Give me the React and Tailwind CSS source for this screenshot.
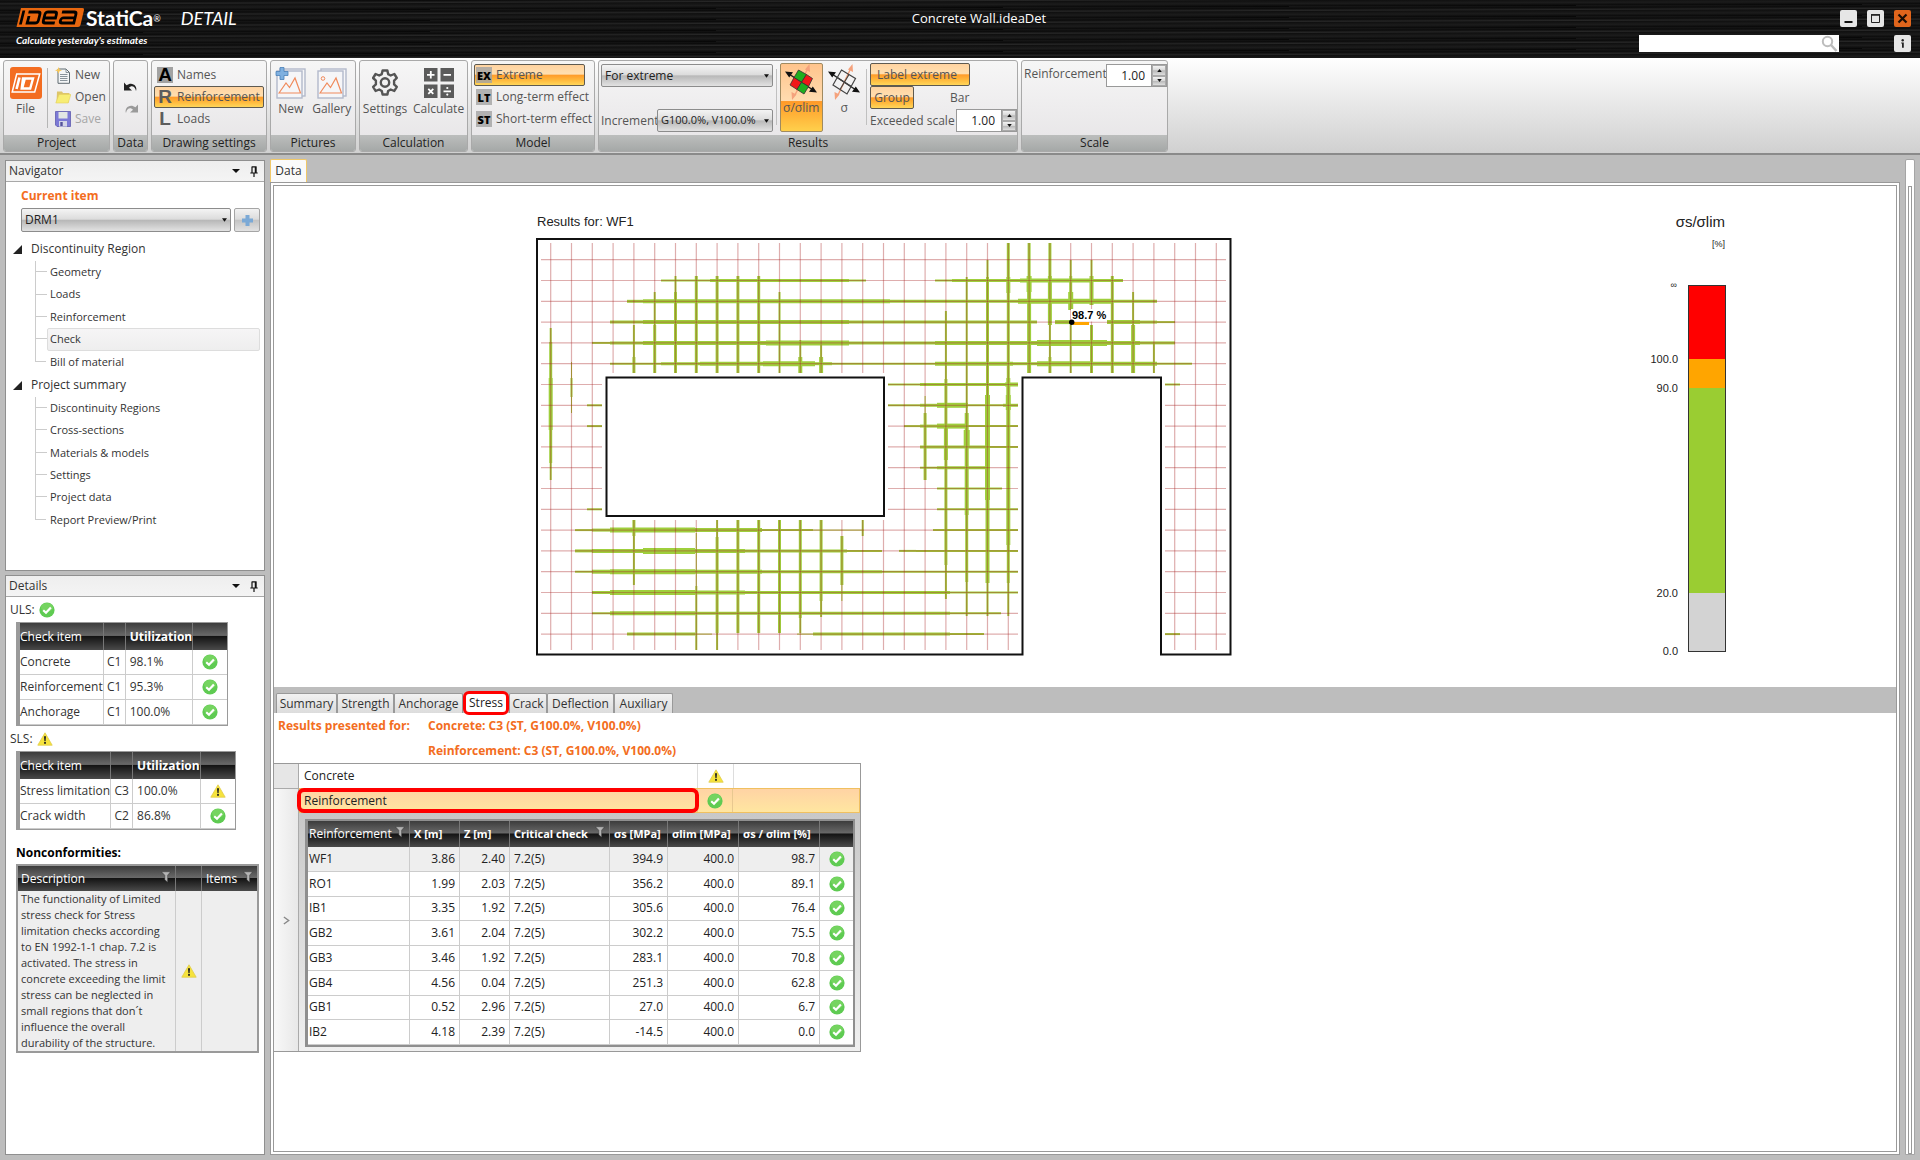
import React from "react";

const glossy = "border border-[#8c8c8c] bg-[linear-gradient(#f4f4f4_0%,#dcdcdc_46%,#b8b8b8_52%,#e2e2e2_100%)]";
const amber =
  "border border-[#5e5a50] bg-[linear-gradient(#ffd3a0_0%,#ffdfb0_45%,#ff9d2a_52%,#ffb83c_75%,#ffd65a_100%)]";
const darkHead =
  "bg-[linear-gradient(#3c3c3c_0%,#686868_46%,#141414_50%,#4a4a4a_100%)] text-white";

/* ---------- icons ---------- */

function Ok() {
  return (
    <svg viewBox="0 0 16 16" className="size-4 shrink-0" aria-label="ok">
      <circle cx="8" cy="8" r="7.6" fill="#5fcb52" />
      <ellipse cx="8" cy="5.4" rx="6" ry="4.4" fill="#86dc6c" opacity=".55" />
      <path d="M4.2 8.2 7 10.8 11.9 5.6" fill="none" stroke="#fff" strokeWidth="2.2" />
    </svg>
  );
}

function Warn() {
  return (
    <svg viewBox="0 0 16 16" className="size-4 shrink-0" aria-label="warning">
      <path d="M8 1.8 15.2 14.2H.8z" fill="#f6e33c" stroke="#e0cc4a" strokeWidth=".8" strokeLinejoin="round" />
      <path d="M7 5.2h2l-.4 5H7.4z" fill="#222" />
      <rect x="7.1" y="11" width="1.8" height="1.8" fill="#222" />
    </svg>
  );
}

function Funnel() {
  return (
    <svg viewBox="0 0 10 12" className="mb-1 h-3 w-[10px] shrink-0">
      <path d="M.5.8h9L6.600 4.200v7L3.800 8.800V4.200z" fill="#b4b4b4" stroke="#2a2a2a" strokeWidth=".4" />
    </svg>
  );
}

function Logo() {
  return (
    <svg viewBox="0 0 70 20" className="h-5 w-[70px] shrink-0" aria-label="IDEA">
      <path d="M5 0h61.500q2 0 1.500 2l-3.500 15q-.5 2-2.500 2H.5z" fill="#e8670f" />
      <g fill="none" stroke="#000" strokeWidth="2.800" transform="skewX(-14) translate(4 0)">
        <path d="M4.500 2.500v14" />
        <path d="M9.500 4h9.500q2.500 0 2.500 2.500v6q0 2.500-2.500 2.500H9.500M11 8v8" />
        <path d="M38.500 15H29q-2.500 0-2.500-2.500v-6Q26.500 4 29 4h6.500q2.500 0 2.500 2.500V10H27" />
        <path d="M43 4h12q2.500 0 2.500 2.500V15H46q-2.500 0-2.500-2.500T46 9.800h11" />
      </g>
    </svg>
  );
}

function FileIcon() {
  return (
    <svg viewBox="0 0 32 32" className="size-8">
      <rect width="32" height="32" rx="3" fill="#f36d21" />
      <g fill="none" stroke="#fff">
        <path d="M6 7h23l-5 18H1.500z" strokeWidth="1.500" transform="translate(.7 0)" />
        <path d="M9.500 10.500 6.500 22" strokeWidth="2.600" />
        <path d="M13 11.500h10l-2.800 10h-8.500zM15 11l-3 11" strokeWidth="2.400" />
      </g>
    </svg>
  );
}

function NewDoc() {
  return (
    <svg viewBox="0 0 16 17" className="h-[17px] w-4">
      <path d="M3 2h8l3.500 3.500V16.300H3z" fill="#f4f6f7" stroke="#5f6a70" />
      <path d="M11 2v3.500h3.500M5 7.500h7.500M5 9.500h7.500M5 11.500h7.500M5 13.500h7.500" fill="none" stroke="#7d888e" strokeWidth=".9" />
      <path d="M3.500 0l1 2.500L7 3.300 4.500 4.200l-1 2.600-1-2.600L0 3.300l2.500-.8z" fill="#f8c85a" />
    </svg>
  );
}

function OpenFolder() {
  return (
    <svg viewBox="0 0 16 14" className="h-[14px] w-4">
      <path d="M1.500 12.500 2 1.500h5l1 1.500h6.500l-.8 9.500z" fill="#ddc56a" />
      <path d="M4 4.500h11.800l-2.600 8.500H.8z" fill="#f7ed74" stroke="#e4d05a" strokeWidth=".6" />
    </svg>
  );
}

function SaveIcon() {
  return (
    <svg viewBox="0 0 16 16" className="size-4">
      <path d="M.5.5h15v15H2l-1.500-1.500z" fill="#7c79d6" stroke="#5f5cae" strokeWidth=".8" />
      <rect x="3.500" y="1" width="9" height="6.500" fill="#e2e6e4" />
      <rect x="4" y="10" width="8" height="5.600" fill="#d4d6e8" />
      <rect x="5.300" y="11" width="2.400" height="4" fill="#55529c" />
    </svg>
  );
}

function Arc({ flip, color }) {
  return (
    <svg viewBox="0 0 16 12" className={flip ? "h-3 w-4 -scale-x-100" : "h-3 w-4"}>
      <path d="M1 1.500v8h8L6 6.800C8 4 12.300 4.800 13 10c2-5-4-10-9.500-5.700z" fill={color} />
    </svg>
  );
}

function PictureIcon({ plus }) {
  return (
    <svg viewBox="0 0 32 34" className="h-[34px] w-8">
      <g fill="#f6f6f8" stroke="#b3b9cb" strokeWidth="1.400">
        <rect x="5" y="3" width="25" height="27" />
        <rect x="2" y="5" width="25" height="27" />
      </g>
      <path d="M4 27 11 17l3.500 4.500L20 12l5.500 15z" fill="none" stroke="#f08a5c" strokeWidth="1.200" />
      {plus ? (
        <path d="M5 1.500h4v4h4v4H9v4H5v-4H1v-4h4z" fill="#7fb0e0" stroke="#4a80b8" strokeWidth=".8" />
      ) : (
        <circle cx="7" cy="12.500" r="1.800" fill="none" stroke="#f08a5c" />
      )}
    </svg>
  );
}

function Gear() {
  return (
    <svg viewBox="0 0 28 28" className="size-7" fill="none" stroke="#555" strokeWidth="2.400" strokeLinejoin="round">
      <path d="M11.600 1.500h4.800l.7 3.600 2.600 1.400 3.600-1.500 2.500 4-2.700 2.600v3.800l2.700 2.500-2.500 4.100-3.600-1.500-2.600 1.500-.7 3.500h-4.800l-.8-3.500-2.600-1.500L4.600 22l-2.500-4.100 2.800-2.500v-3.800L2.100 9l2.500-4 3.600 1.500 2.600-1.400z" />
      <circle cx="14" cy="13.500" r="4.200" />
    </svg>
  );
}

function CalcIcon() {
  return (
    <svg viewBox="0 0 30 30" className="size-[30px]">
      <g fill="#5b5b5b">
        <rect width="13.500" height="13.500" />
        <rect x="16.500" width="13.500" height="13.500" />
        <rect y="16.500" width="13.500" height="13.500" />
        <rect x="16.500" y="16.500" width="13.500" height="13.500" />
      </g>
      <g stroke="#fff" strokeWidth="1.800" fill="none">
        <path d="M3 6.800h7.500M6.800 3v7.500M19.500 6.800H27M4.300 20.800l5 5M9.300 20.800l-5 5M19.500 23.300H27" />
      </g>
      <circle cx="23.300" cy="20" r="1.100" fill="#fff" />
      <circle cx="23.300" cy="26.600" r="1.100" fill="#fff" />
    </svg>
  );
}

function SigmaIcon({ filled }) {
  return (
    <svg viewBox="0 0 32 36" className="h-9 w-8">
      <g stroke="#f5a27c" strokeWidth="1.500" fill="#f5a27c">
        <path d="M22 6 10 31" />
        <path d="m24.500 0 .5 8-5-2.500zM7 36l-.5-8 5 2.500z" stroke="none" />
      </g>
      <path d="M4 10l24 16" stroke="#222" strokeWidth="1.500" />
      <path d="M0 7.500l8 .8-3.800 5.300zM32 28.500l-8-.8 3.800-5.300z" fill="#111" />
      {filled ? (
        <g stroke="#333" strokeWidth=".8">
          <path d="M13.500 6 21.500 10.500 16.500 18.300 9 13.500z" fill="#1fae1f" />
          <path d="M21.500 10.500 27.500 14.500 23.500 22.500 16.500 18.300z" fill="#f01818" />
          <path d="M9 13.500 16.500 18.300 12 25.500 5 21z" fill="#f01818" />
          <path d="M16.500 18.300 23.500 22.500 19 30 12 25.500z" fill="#1fae1f" />
        </g>
      ) : (
        <path d="M13.500 6 27.500 14.500 19 30 5 21zM21 10.500 12 25.500M9 13.500l14.500 9" fill="none" stroke="#444" strokeWidth="1.200" />
      )}
    </svg>
  );
}

/* ---------- ribbon ---------- */

function Group({ title, className, children }) {
  return (
    <section className={`flex h-[92px] flex-col overflow-hidden rounded-[3px] border border-[#a9a9a9] bg-linear-to-b from-[#f6f6f6] to-[#e6e4e6] ${className}`}>
      <div className="flex flex-1">{children}</div>
      <h2 className="h-4 bg-linear-to-b from-[#bcbebd] to-[#a5a8a7] text-center text-[12px] leading-4 text-[#222]">{title}</h2>
    </section>
  );
}

function BigButton({ icon, label }) {
  return (
    <button className="flex flex-col items-center">
      <span className="flex h-9 items-center">{icon}</span>
      <span className="leading-4">{label}</span>
    </button>
  );
}

function Row({ icon, label, className = "" }) {
  return (
    <button className={`flex h-[22px] items-center gap-1 rounded-[2px] ${className}`}>
      {icon}
      <span>{label}</span>
    </button>
  );
}

function Letter({ c, on }) {
  return (
    <span className={`flex h-4 w-4 shrink-0 items-center justify-center font-["Liberation_Sans"] text-[19px] leading-4 font-bold ${on ? "bg-[#a2a2a2] text-black" : "text-[#5c5c5c]"}`}>
      {c}
    </span>
  );
}

function Tag({ c }) {
  return (
    <span className="flex h-4 w-4 shrink-0 items-center justify-center bg-[#a2a2a2]/80 font-['Open_Sans'] text-[11px] leading-none font-extrabold text-black">{c}</span>
  );
}

function Drop({ value, label, className, text = "text-[12px]" }) {
  return (
    <span className={`relative flex ${className}`}>
      <select aria-label={label} className={`w-full appearance-none rounded-[2px] px-[3px] text-[#222] ${text} ${glossy}`}>
        <option>{value}</option>
      </select>
      <svg viewBox="0 0 6 4" className="pointer-events-none absolute top-1/2 right-1 h-1 w-[5px] -translate-y-1/2">
        <path d="M0 0h6L3 4z" fill="#111" />
      </svg>
    </span>
  );
}

function Spin({ label, id, className = "" }) {
  return (
    <span className={`flex h-[23px] w-[61px] border border-[#999] bg-white ${className}`}>
      <input id={id} aria-label={label} defaultValue="1.00" className="w-11 bg-white pr-[6px] text-right text-[12px] text-[#222]" />
      <span className="flex w-[15px] flex-col border-l border-[#999]">
        {["up", "down"].map((d) => (
          <button key={d} aria-label={d} className="flex flex-1 items-center justify-center border border-[#aaa] bg-[linear-gradient(#f2f2f2_0%,#d8d8d8_46%,#b8b8b8_52%,#dedede_100%)]">
            <svg viewBox="0 0 6 4" className="h-[3px] w-[5px]">
              <path d={d === "up" ? "M0 4h6L3 0z" : "M0 0h6L3 4z"} fill="#111" />
            </svg>
          </button>
        ))}
      </span>
    </span>
  );
}

function Ribbon() {
  return (
    <div className="flex h-[97px] items-start gap-[3px] border-b-2 border-[#8a8a8a] bg-linear-to-b from-white to-[#d0d0d0] pt-[2px] pl-[3px] text-[12px] text-[#555]">
      <Group title="Project" className="w-[107px]">
        <div className="flex w-[43px] justify-center pt-1">
          <BigButton icon={<FileIcon />} label="File" />
        </div>
        <div className="my-[7px] w-px bg-[#b5b5b5]" />
        <div className="flex flex-col pt-[3px] pl-[7px]">
          <Row icon={<NewDoc />} label="New" />
          <Row icon={<OpenFolder />} label="Open" />
          <Row icon={<SaveIcon />} label="Save" className="text-[#a6a6a6]" />
        </div>
      </Group>
      <Group title="Data" className="w-[35px]">
        <div className="flex flex-1 flex-col items-center gap-[10px] pt-5">
          <button aria-label="Undo"><Arc color="#222" /></button>
          <button aria-label="Redo"><Arc flip color="#9a9a9a" /></button>
        </div>
      </Group>
      <Group title="Drawing settings" className="w-[116px]">
        <div className="flex flex-1 flex-col px-[2px] pt-[3px]">
          <Row icon={<Letter c="A" on />} label="Names" className="pl-[3px]" />
          <Row icon={<Letter c="R" />} label="Reinforcement" className={`pl-[2px] ${amber}`} />
          <Row icon={<Letter c="L" />} label="Loads" className="pl-[3px]" />
        </div>
      </Group>
      <Group title="Pictures" className="w-[86px]">
        <div className="flex flex-1 justify-around px-px pt-1">
          <BigButton icon={<PictureIcon plus />} label="New" />
          <BigButton icon={<PictureIcon />} label="Gallery" />
        </div>
      </Group>
      <Group title="Calculation" className="w-[109px]">
        <div className="flex flex-1 justify-around pt-1">
          <BigButton icon={<Gear />} label="Settings" />
          <BigButton icon={<CalcIcon />} label="Calculate" />
        </div>
      </Group>
      <Group title="Model" className="w-[124px]">
        <div className="flex flex-1 flex-col pt-[3px] pl-[2px]">
          <Row icon={<Tag c="EX" />} label="Extreme" className={`w-[111px] pl-px ${amber}`} />
          <Row icon={<Tag c="LT" />} label="Long-term effect" className="pl-[2px] whitespace-nowrap" />
          <Row icon={<Tag c="ST" />} label="Short-term effect" className="pl-[2px] whitespace-nowrap" />
        </div>
      </Group>
      <Group title="Results" className="w-[420px]">
        <div className="flex w-[175px] flex-col justify-between pt-[3px] pb-[3px] pl-[2px]">
          <Drop label="Results type" value="For extreme" className="h-[23px] w-[172px]" />
          <div className="flex items-center">
            <span className="w-14 whitespace-nowrap">Increment</span>
            <Drop label="Increment" value="G100.0%, V100.0%" text="text-[11px]" className="h-[23px] w-[116px]" />
          </div>
        </div>
        <div className="mx-[3px] mt-2 mb-[10px] w-px bg-[#c0c0c0]" />
        <button className="mt-[2px] flex h-[69px] w-[43px] flex-col items-center rounded-[2px] border border-[#a08a60] bg-[linear-gradient(#ffc48c_0%,#ffdcb0_55%,#ff9a28_56%,#ffd04c_100%)]">
          <SigmaIcon filled />
          <span className="leading-4">σ/σlim</span>
        </button>
        <button className="mt-[3px] flex w-11 flex-col items-center">
          <SigmaIcon />
          <span className="leading-4">σ</span>
        </button>
        <div className="mt-2 mb-[10px] w-px bg-[#c0c0c0]" />
        <div className="flex flex-1 flex-col pt-[2px] pl-[3px]">
          <button className={`h-[23px] w-[100px] rounded-[2px] pl-[6px] text-left ${amber}`}>Label extreme</button>
          <div className="flex items-center">
            <button className={`h-[23px] w-11 rounded-[2px] ${amber}`}>Group</button>
            <button className="ml-[36px]">Bar</button>
          </div>
          <div className="flex items-center">
            <label htmlFor="exceeded" className="w-[86px] whitespace-nowrap">Exceeded scale</label>
            <Spin id="exceeded" label="Exceeded scale" />
          </div>
        </div>
      </Group>
      <Group title="Scale" className="w-[147px]">
        <div className="flex flex-1 items-start pt-[3px] pl-[2px]">
          <label htmlFor="scale" className="w-[82px] leading-5">Reinforcement</label>
          <Spin id="scale" label="Reinforcement" />
        </div>
      </Group>
    </div>
  );
}

/* ---------- header ---------- */

function Header() {
  const wb = "flex size-[17px] items-center justify-center rounded-[2px] bg-[#e6e6e6]";
  return (
    <header className="grid h-[58px] grid-cols-3 bg-black bg-[repeating-linear-gradient(179.8deg,#161616_0px,#0c0c0c_2px,#262626_4px,#101010_5px,#1c1c1c_8px,#080808_11px)] text-white">
      <div className="pt-2 pl-4">
        <div className="flex h-5 items-center">
          <Logo />
          <span className="font-['Lato'] text-[21px] leading-5 font-bold whitespace-nowrap">StatiCa<sup className="text-[9px] font-normal">®</sup></span>
          <span className="pl-5 font-['Lato'] text-[18px] leading-5 italic">DETAIL</span>
        </div>
        <p className="pt-[5px] font-['Lato'] text-[10px] leading-[14px] font-bold italic">Calculate yesterday's estimates</p>
      </div>
      <h1 className="pt-[10px] pl-[38px] text-center text-[13px] leading-4">Concrete Wall.ideaDet</h1>
      <div className="flex flex-col items-end gap-2 pt-[10px] pr-[9px]">
        <div className="flex gap-[10px]">
          <button aria-label="Minimize" className={wb}>
            <svg viewBox="0 0 17 17" className="size-[17px]"><path d="M4.500 12h8" stroke="#111" strokeWidth="2" /></svg>
          </button>
          <button aria-label="Maximize" className={wb}>
            <svg viewBox="0 0 17 17" className="size-[17px]"><path d="M4.500 5h8v7.500h-8z" fill="none" stroke="#222" /><path d="M4 4.800h9" stroke="#222" strokeWidth="1.500" /></svg>
          </button>
          <button aria-label="Close" className="flex size-[17px] items-center justify-center rounded-[2px] bg-[#e0651c]">
            <svg viewBox="0 0 17 17" className="size-[17px]"><path d="m4.500 4.500 8 8m0-8-8 8" stroke="#1a0d04" strokeWidth="2.200" /></svg>
          </button>
        </div>
        <div className="flex items-center">
          <span className="relative mr-[55px] flex">
            <input aria-label="Search" className="h-[17px] w-[200px] bg-white text-[12px] text-black" />
            <svg viewBox="0 0 17 17" className="pointer-events-none absolute top-0 right-px size-[17px]" fill="none" stroke="#bdbdbd">
              <circle cx="6.500" cy="6.500" r="4.700" strokeWidth="2" />
              <path d="m10 10 5.500 6" strokeWidth="2.500" />
            </svg>
          </span>
          <button aria-label="Information" className={wb}>
            <svg viewBox="0 0 17 17" className="size-[17px]" fill="#222"><circle cx="8.700" cy="5.200" r="1.200" /><path d="M7.200 7.500h2.600v5.200H8V8.500h-.8z" /></svg>
          </button>
        </div>
      </div>
    </header>
  );
}

/* ---------- side panels ---------- */

function Panel({ title, className, children }) {
  return (
    <section className={`border border-[#8f8f8f] bg-white ${className}`}>
      <div className="flex h-[21px] items-center border-b border-[#a8a8a8] bg-linear-to-b from-[#eee] to-[#f4f4f4] pr-[6px] pl-[3px]">
        <h2 className="flex-1 text-[12px] text-[#333]">{title}</h2>
        <button aria-label={`${title} menu`} className="mr-[10px]">
          <svg viewBox="0 0 8 4" className="h-1 w-2"><path d="M0 0h8L4 4z" fill="#111" /></svg>
        </button>
        <button aria-label={`Pin ${title}`}>
          <svg viewBox="0 0 8 11" className="h-[11px] w-2"><path d="M2 .8h4v6M2 .5v6.300M.3 7h7.400M4 7v4" fill="none" stroke="#111" strokeWidth="1.200" /><path d="M5.500 1v6" stroke="#111" strokeWidth="1.500" /></svg>
        </button>
      </div>
      {children}
    </section>
  );
}

function Branch({ title, items, active, className }) {
  return (
    <div>
      <button className="flex h-6 items-center gap-[9px] pl-[7px] text-[12px] text-[#333]">
        <svg viewBox="0 0 8 8" className="size-[9px]"><path d="M8 0v8H0z" fill="#222" /></svg>
        {title}
      </button>
      <ul className={`grid auto-rows-fr pr-1 pl-[29px] text-[11px] text-[#333] ${className}`}>
        {items.map((it, i) => (
          <li key={it} className="flex">
            <span className={`relative w-3 border-[#ccc] ${i === items.length - 1 ? "" : "border-l"}`}>
              <span className={`absolute top-0 left-0 h-1/2 w-[11px] border-b border-[#ccc] ${i === items.length - 1 ? "border-l" : ""}`} />
            </span>
            <a href="#" className={`flex flex-1 items-center rounded-[2px] border pl-[2px] ${it === active ? "border-[#ddd] bg-linear-to-b from-[#f6f5f6] to-[#eee]" : "border-transparent"}`}>
              {it}
            </a>
          </li>
        ))}
      </ul>
    </div>
  );
}

const th = "border-r border-[#777] text-left";
const td = "border-r border-b border-[#ccc]";

function CheckTable({ label, cols, rows }) {
  return (
    <table aria-label={label} className="ml-[10px] table-fixed border-separate border-spacing-0 border border-l-[4px] border-[#9a9a9a] text-[12px] text-[#333]">
      <colgroup>{cols.map((c, i) => <col key={i} style={{ width: c }} />)}</colgroup>
      <thead>
        <tr className={`h-[27px] ${darkHead}`}>
          <th className={`${th} font-normal`}>Check item</th>
          <th className={th} />
          <th className={`${th} pl-1 font-bold`}>Utilization</th>
          <th />
        </tr>
      </thead>
      <tbody>
        {rows.map((r) => (
          <tr key={r[0]} className="h-[25px]">
            <td className={`${td} whitespace-nowrap`}>{r[0]}</td>
            <td className={`${td} text-center`}>{r[1]}</td>
            <td className={`${td} pl-1`}>{r[2]}</td>
            <td className="border-b border-[#ccc]"><span className="flex justify-center">{r[3] ? <Ok /> : <Warn />}</span></td>
          </tr>
        ))}
      </tbody>
    </table>
  );
}

function Sidebar() {
  return (
    <aside className="flex w-[260px] shrink-0 flex-col gap-1">
      <Panel title="Navigator" className="h-[411px]">
        <h3 className="pt-[5px] pl-[15px] text-[12px] leading-[18px] font-bold text-[#f36d21]">Current item</h3>
        <div className="flex gap-[3px] pt-[3px] pr-[4px] pl-[15px]">
          <Drop label="Current item" value="DRM1" className="h-6 flex-1" />
          <button aria-label="Add item" className="flex h-6 w-[26px] items-center justify-center rounded-[2px] border border-[#a5a5a5] bg-[linear-gradient(#f2f2f2_0%,#dcdcdc_46%,#c4c4c4_52%,#e2e2e2_100%)]">
            <svg viewBox="0 0 13 13" className="size-[13px]"><path d="M4.500 1h4v3.500H12v4H8.500V12h-4V8.500H1v-4h3.500z" fill="#7ba9d6" /></svg>
          </button>
        </div>
        <div className="pt-[5px]">
          <Branch title="Discontinuity Region" active="Check" className="h-28" items={["Geometry", "Loads", "Reinforcement", "Check", "Bill of material"]} />
          <Branch title="Project summary" className="h-[134px]" items={["Discontinuity Regions", "Cross-sections", "Materials & models", "Settings", "Project data", "Report Preview/Print"]} />
        </div>
      </Panel>
      <Panel title="Details" className="flex-1">
        <p className="flex h-[25px] items-center gap-1 pl-1 text-[12px] text-[#333]">ULS: <Ok /></p>
        <CheckTable
          label="ULS checks"
          cols={[82, 22, 65, 34]}
          rows={[["Concrete", "C1", "98.1%", 1], ["Reinforcement", "C1", "95.3%", 1], ["Anchorage", "C1", "100.0%", 1]]}
        />
        <p className="flex h-[25px] items-center gap-1 pl-1 text-[12px] text-[#333]">SLS: <Warn /></p>
        <CheckTable
          label="SLS checks"
          cols={[90, 22, 66, 34]}
          rows={[["Stress limitation", "C3", "100.0%", 0], ["Crack width", "C2", "86.8%", 1]]}
        />
        <h3 className="pt-[14px] pb-[2px] pl-[10px] text-[12px] leading-[18px] font-bold text-black">Nonconformities:</h3>
        <table className="ml-[10px] table-fixed border-separate border-spacing-0 border-2 border-[#9a9a9a] text-[12px] text-[#333]">
          <colgroup><col className="w-[158px]" /><col className="w-[26px]" /><col className="w-[55px]" /></colgroup>
          <thead>
            <tr className={`h-[25px] ${darkHead}`}>
              <th className={`${th} pl-[3px] font-normal`}><span className="flex items-center justify-between pr-1">Description <Funnel /></span></th>
              <th className={th} />
              <th className="pl-1 text-left font-normal"><span className="flex items-center justify-between pr-1">Items <Funnel /></span></th>
            </tr>
          </thead>
          <tbody>
            <tr className="h-[159px] bg-[#eee]">
              <td className="border-r border-[#ccc] pl-[3px] text-[11px] leading-4 whitespace-nowrap">
                The functionality of Limited<br />stress check for Stress<br />limitation checks according<br />to EN 1992-1-1 chap. 7.2 is<br />activated. The stress in<br />concrete exceeding the limit<br />stress can be neglected in<br />small regions that don´t<br />influence the overall<br />durability of the structure.
              </td>
              <td className="border-r border-[#ccc]"><span className="flex justify-center"><Warn /></span></td>
              <td />
            </tr>
          </tbody>
        </table>
      </Panel>
    </aside>
  );
}

/* ---------- wall drawing ---------- */

const gx = (i) => 550.7 + 20.8 * i;
const gy = (j) => 259.7 + 20.8 * j;

/* Stressed bar pieces: grid index, then [from, to, thickness]. */
const hBars = {
  1: [[661, 710, 2], [710, 849, 3], [849, 866, 2], [935, 952, 2], [952, 1123, 3], [1020, 1090, 4]],
  2: [[627, 643, 3], [643, 890, 4], [890, 1018, 3], [1018, 1113, 5], [1113, 1157, 3]],
  3: [[610, 643, 3], [643, 766, 4], [766, 849, 4], [849, 1037, 3], [1055, 1072, 4], [1107, 1140, 4], [1140, 1157, 3], [1157, 1175, 2]],
  4: [[592, 610, 2], [610, 643, 3], [643, 766, 4], [766, 849, 5], [849, 935, 3], [935, 1037, 4], [1037, 1107, 6], [1107, 1140, 4], [1140, 1157, 3], [1157, 1175, 3]],
  5: [[610, 661, 2], [661, 700, 3], [700, 763, 4], [763, 815, 5], [815, 832, 3], [832, 935, 2], [935, 1013, 4], [1013, 1037, 3], [1037, 1093, 5], [1093, 1157, 4], [1157, 1175, 2], [1175, 1192, 2]],
  6: [[888, 920, 2], [920, 1005, 3], [1005, 1018, 4], [1165, 1180, 2]],
  7: [[587, 602, 2], [888, 920, 2], [920, 937, 3], [937, 968, 5], [968, 1003, 2], [1003, 1018, 3]],
  8: [[587, 602, 2], [904, 920, 2], [920, 937, 3], [937, 968, 5], [968, 1018, 2]],
  9: [[920, 985, 3], [985, 1018, 2]],
  10: [[920, 937, 2], [937, 988, 3]],
  11: [[937, 1002, 2]],
  12: [[587, 602, 2], [937, 1018, 2]],
  13: [[575, 592, 2], [592, 610, 3], [610, 695, 5], [695, 762, 4], [762, 813, 2], [813, 864, 1], [933, 1018, 2]],
  14: [[575, 592, 3], [592, 643, 4], [643, 695, 6], [695, 745, 4], [745, 847, 3], [847, 882, 2], [899, 916, 2], [916, 1018, 2]],
  15: [[575, 592, 2], [592, 610, 4], [610, 695, 5], [695, 762, 4], [762, 882, 3], [882, 1018, 2]],
  16: [[592, 610, 3], [610, 695, 5], [695, 745, 4], [745, 950, 3], [950, 1018, 2]],
  17: [[592, 610, 2], [610, 695, 4], [695, 950, 3], [950, 1001, 2]],
  18: [[627, 695, 3], [695, 712, 1], [797, 813, 1], [813, 950, 3], [950, 984, 2], [1165, 1180, 2]],
};

const vBars = {
  0: [[328, 342, 2], [342, 378, 3], [378, 430, 4], [430, 463, 3], [463, 480, 2]],
  1: [[362, 378, 1], [378, 397, 2], [397, 413, 1]],
  4: [[325, 357, 2], [357, 373, 3], [520, 536, 3], [536, 585, 2]],
  5: [[292, 325, 2], [325, 373, 3]],
  6: [[276, 292, 2], [292, 373, 3]],
  7: [[276, 373, 3], [533, 586, 1], [586, 650, 2]],
  8: [[276, 373, 3], [520, 537, 2], [537, 633, 3], [633, 650, 2]],
  9: [[276, 373, 3], [520, 633, 3]],
  10: [[276, 373, 3], [520, 633, 3]],
  11: [[292, 373, 2], [520, 633, 3]],
  12: [[340, 357, 2], [357, 373, 4], [520, 618, 3], [618, 633, 2]],
  13: [[344, 357, 2], [357, 373, 4], [520, 601, 3], [601, 617, 2]],
  14: [[536, 585, 3], [585, 601, 1]],
  15: [[520, 536, 2]],
  18: [[396, 413, 1], [413, 480, 3]],
  19: [[311, 379, 2], [379, 500, 3], [428, 460, 4], [500, 565, 3], [565, 599, 2]],
  20: [[277, 396, 2], [413, 430, 4], [430, 447, 6], [447, 463, 4], [463, 515, 4], [515, 582, 3], [582, 616, 2], [396, 413, 2]],
  21: [[260, 277, 2], [277, 395, 3], [395, 500, 5], [500, 583, 4], [583, 616, 2]],
  22: [[243, 277, 3], [277, 293, 4], [293, 378, 3], [378, 395, 4], [395, 410, 5], [410, 545, 4], [545, 583, 3], [583, 616, 2]],
  23: [[243, 276, 3], [276, 292, 5], [292, 373, 4]],
  24: [[243, 276, 3], [276, 325, 4], [325, 357, 2], [357, 373, 3]],
  25: [[260, 276, 2], [276, 292, 3], [292, 310, 5], [325, 373, 2]],
  26: [[260, 276, 2], [276, 305, 4], [325, 373, 3]],
  27: [[276, 373, 3]],
  28: [[292, 325, 2], [325, 373, 4]],
  29: [[343, 373, 2]],
};

const hSpans = (j) => (j < 6 ? [[541, 1226]] : j < 13 ? [[541, 602], [888, 1018], [1165, 1226]] : [[541, 1018], [1165, 1226]]);
const vSpans = (i) =>
  i < 3 || (i > 16 && i < 23) || i > 29 ? [[243, 650]] : i < 17 ? [[243, 373], [520, 650]] : [[243, 373]];

function Wall() {
  const cols = Array.from({ length: 33 }, (_, i) => i);
  const rows = Array.from({ length: 19 }, (_, j) => j);
  return (
    <svg viewBox="534 236 700 422" className="h-[422px] w-[700px]" aria-label="Wall reinforcement stress">
      <g stroke="#9acd32" opacity=".95">
        {Object.entries(hBars).flatMap(([j, l]) => l.map(([a, b, w], k) => <line key={`h${j}-${k}`} x1={a} x2={b} y1={gy(+j)} y2={gy(+j)} strokeWidth={w} />))}
        {Object.entries(vBars).flatMap(([i, l]) => l.map(([a, b, w], k) => <line key={`v${i}-${k}`} y1={a} y2={b} x1={gx(+i)} x2={gx(+i)} strokeWidth={w} />))}
      </g>
      <g stroke="#a82828" strokeOpacity=".38" strokeWidth="1.200">
        {rows.flatMap((j) => hSpans(j).map(([a, b]) => <line key={`r${j}-${a}`} x1={a} x2={b} y1={gy(j)} y2={gy(j)} />))}
        {cols.flatMap((i) => vSpans(i).map(([a, b]) => <line key={`c${i}-${a}`} y1={a} y2={b} x1={gx(i)} x2={gx(i)} />))}
      </g>
      <g fill="none" stroke="#111" strokeWidth="2">
        <path d="M537 239H1230.500V654.500H1161V377.500H1022.500V654.500H537z" />
        <path d="M606.500 377.500H884V516H606.500z" />
      </g>
      <rect x="1071" y="309" width="36" height="12.500" fill="#fff" />
      <rect x="1073" y="322" width="16" height="3" fill="#ffa500" />
      <circle cx="1071.700" cy="322.300" r="2.700" />
      <text x="1072" y="319" fontFamily="Liberation Sans, sans-serif" fontWeight="bold" fontSize="11">98.7 %</text>
    </svg>
  );
}

function Legend() {
  return (
    <svg viewBox="1640 210 90 446" className="h-[446px] w-[90px]" fontFamily="Liberation Sans, sans-serif" textAnchor="end" fill="#222" aria-label="Legend">
      <text x="1725" y="227" fontSize="15">σs/σlim</text>
      <text x="1725" y="247" fontSize="9">[%]</text>
      <rect x="1689" y="286" width="36" height="73" fill="#f00" />
      <rect x="1689" y="359" width="36" height="29" fill="#ffa500" />
      <rect x="1689" y="388" width="36" height="205" fill="#9acd32" />
      <rect x="1689" y="593" width="36" height="58" fill="#d3d3d3" />
      <rect x="1688.500" y="285.500" width="37" height="366" fill="none" stroke="#333" />
      <g fontSize="11">
        <text x="1677" y="288" fontSize="9">∞</text>
        <text x="1678" y="363">100.0</text>
        <text x="1678" y="392">90.0</text>
        <text x="1678" y="597">20.0</text>
        <text x="1678" y="655">0.0</text>
      </g>
    </svg>
  );
}

/* ---------- results ---------- */

const tabs = [["Summary", "w-[61px]"], ["Strength", "w-[57px]"], ["Anchorage", "w-[69px]"], ["Stress", "w-[46px]"], ["Crack", "w-[38px]"], ["Deflection", "w-[67px]"], ["Auxiliary", "w-[59px]"]];

const bars = [
  ["WF1", "3.86", "2.40", "394.9", "98.7"],
  ["RO1", "1.99", "2.03", "356.2", "89.1"],
  ["IB1", "3.35", "1.92", "305.6", "76.4"],
  ["GB2", "3.61", "2.04", "302.2", "75.5"],
  ["GB3", "3.46", "1.92", "283.1", "70.8"],
  ["GB4", "4.56", "0.04", "251.3", "62.8"],
  ["GB1", "0.52", "2.96", "27.0", "6.7"],
  ["IB2", "4.18", "2.39", "-14.5", "0.0"],
];

function BarTable() {
  const b = `${th} text-[11px] font-bold whitespace-nowrap`;
  return (
    <table className="h-[228px] w-[550px] table-fixed border-separate border-spacing-0 border-2 border-l-[3px] border-[#8f8f8f] bg-white text-[12px] text-[#222]">
      <colgroup>
        <col className="w-[102px]" /><col className="w-[50px]" /><col className="w-[50px]" /><col className="w-[100px]" />
        <col className="w-[58px]" /><col className="w-[71px]" /><col className="w-[81px]" /><col />
      </colgroup>
      <thead>
        <tr className={`h-[26px] ${darkHead}`}>
          <th className={`${th} pl-px font-normal`}><span className="flex items-center justify-between pr-1">Reinforcement <Funnel /></span></th>
          <th className={`${b} pl-1`}>X [m]</th>
          <th className={`${b} pl-1`}>Z [m]</th>
          <th className={`${b} pl-1`}><span className="flex items-center justify-between pr-1">Critical check <Funnel /></span></th>
          <th className={`${b} pl-1`}>σs [MPa]</th>
          <th className={`${b} pl-1`}>σlim [MPa]</th>
          <th className={`${b} pl-1`}>σs / σlim [%]</th>
          <th />
        </tr>
      </thead>
      <tbody>
        {bars.map(([n, x, z, s, u], i) => (
          <tr key={n} className={i === 0 ? "bg-[#eee]" : ""}>
            <td className={`${td} pl-px`}>{n}</td>
            <td className={`${td} pr-1 text-right`}>{x}</td>
            <td className={`${td} pr-1 text-right`}>{z}</td>
            <td className={`${td} pl-1`}>7.2(5)</td>
            <td className={`${td} pr-1 text-right`}>{s}</td>
            <td className={`${td} pr-1 text-right`}>400.0</td>
            <td className={`${td} pr-1 text-right`}>{u}</td>
            <td className="border-b border-[#ccc]"><span className="flex justify-center"><Ok /></span></td>
          </tr>
        ))}
      </tbody>
    </table>
  );
}

function Results() {
  return (
    <div className="flex flex-1 flex-col">
      <nav className="flex h-[26px] items-end bg-[#bdbdbd] pl-[2px]">
        {tabs.map(([t, w]) =>
          t === "Stress" ? (
            <button key={t} className={`-mb-[2px] h-6 rounded-[6px] border-[3px] border-[#f00] bg-white text-[12px] leading-[18px] text-[#222] ${w}`}>{t}</button>
          ) : (
            <button key={t} className={`h-5 rounded-t-[2px] border border-b-0 border-[#999] bg-linear-to-b from-[#f2f2f2] to-[#dcdcdc] text-[12px] leading-[18px] text-[#333] ${w}`}>{t}</button>
          )
        )}
      </nav>
      <dl className="grid grid-cols-[150px_auto] justify-start pl-1 text-[12px] leading-[25px] font-bold text-[#f36d21]">
        <dt>Results presented for:</dt>
        <dd>Concrete: C3 (ST, G100.0%, V100.0%)</dd>
        <dd className="col-start-2">Reinforcement: C3 (ST, G100.0%, V100.0%)</dd>
      </dl>
      <div className="flex w-[587px] border border-l-0 border-[#999] text-[12px] text-[#222]">
        <div className="flex w-[25px] flex-col border-r border-[#aaa] bg-linear-to-r from-[#f8f8f8] to-[#e8e8e8]">
          <div className="h-[25px] border-b border-[#aaa] bg-[#e6e6e6]" />
          <button aria-label="Expand" className="flex flex-1 items-center justify-center">
            <svg viewBox="0 0 8 10" className="h-[9px] w-[7px]"><path d="m1 1 5.500 4L1 9" fill="none" stroke="#888" strokeWidth="1.600" /></svg>
          </button>
        </div>
        <div className="flex flex-1 flex-col">
          <div className="grid h-6 grid-cols-[1fr_36px_126px] items-stretch bg-white">
            <span className="flex items-center border-r border-[#ddd] pl-[5px]">Concrete</span>
            <span className="flex items-center justify-center border-r border-[#ddd]"><Warn /></span>
            <span />
          </div>
          <div className="relative grid h-[25px] grid-cols-[1fr_36px_126px] items-stretch border border-[#f0c060] bg-linear-to-b from-[#ffd3a4] to-[#ffe6a0]">
            <span className="flex items-center pl-1">Reinforcement</span>
            <span className="flex items-center justify-center border-x border-[#e8c890]"><Ok /></span>
            <span />
            <span className="pointer-events-none absolute -inset-y-px -left-[3px] w-[402px] rounded-[7px] border-4 border-[#f00]" />
          </div>
          <div className="flex-1 bg-linear-to-b from-[#c8c8c8] to-[#f0f0f0] pt-[6px] pb-1 pl-[6px]">
            <BarTable />
          </div>
        </div>
      </div>
    </div>
  );
}

export default function App() {
  return (
    <div className="flex min-h-screen flex-col bg-[#bdbdbd] font-['Open_Sans',sans-serif] text-[12px]">
      <Header />
      <Ribbon />
      <div className="flex flex-1 gap-[5px] pr-[5px] pb-[5px] pl-[5px]">
        <div className="flex pt-[5px]"><Sidebar /></div>
        <main className="flex flex-1 flex-col pt-1">
          <div className="flex h-[23px]">
            <button className="h-full w-[37px] rounded-t-[2px] border border-b-0 border-[#f0c868] bg-[#fafafa] text-[12px] text-[#333]">Data</button>
          </div>
          <div className="flex flex-1 flex-col border border-[#999] bg-white p-[2px]">
            <div className="flex flex-1 flex-col border border-[#999]">
              <div className="flex h-[501px] justify-between pr-[166px] pl-[260px]">
                <figure className="pt-[26px]">
                  <figcaption className="h-6 pl-[3px] font-['Liberation_Sans'] text-[13px] leading-5 text-[#222]">Results for: WF1</figcaption>
                  <Wall />
                </figure>
                <div className="pt-6"><Legend /></div>
              </div>
              <Results />
            </div>
          </div>
        </main>
        <div className="flex w-[10px] pt-1">
          <div className="flex w-[10px] justify-center rounded-t-[2px] border border-[#a5a5a5] bg-white pt-[26px]">
            <div className="w-1 border border-[#999]" />
          </div>
        </div>
      </div>
    </div>
  );
}
